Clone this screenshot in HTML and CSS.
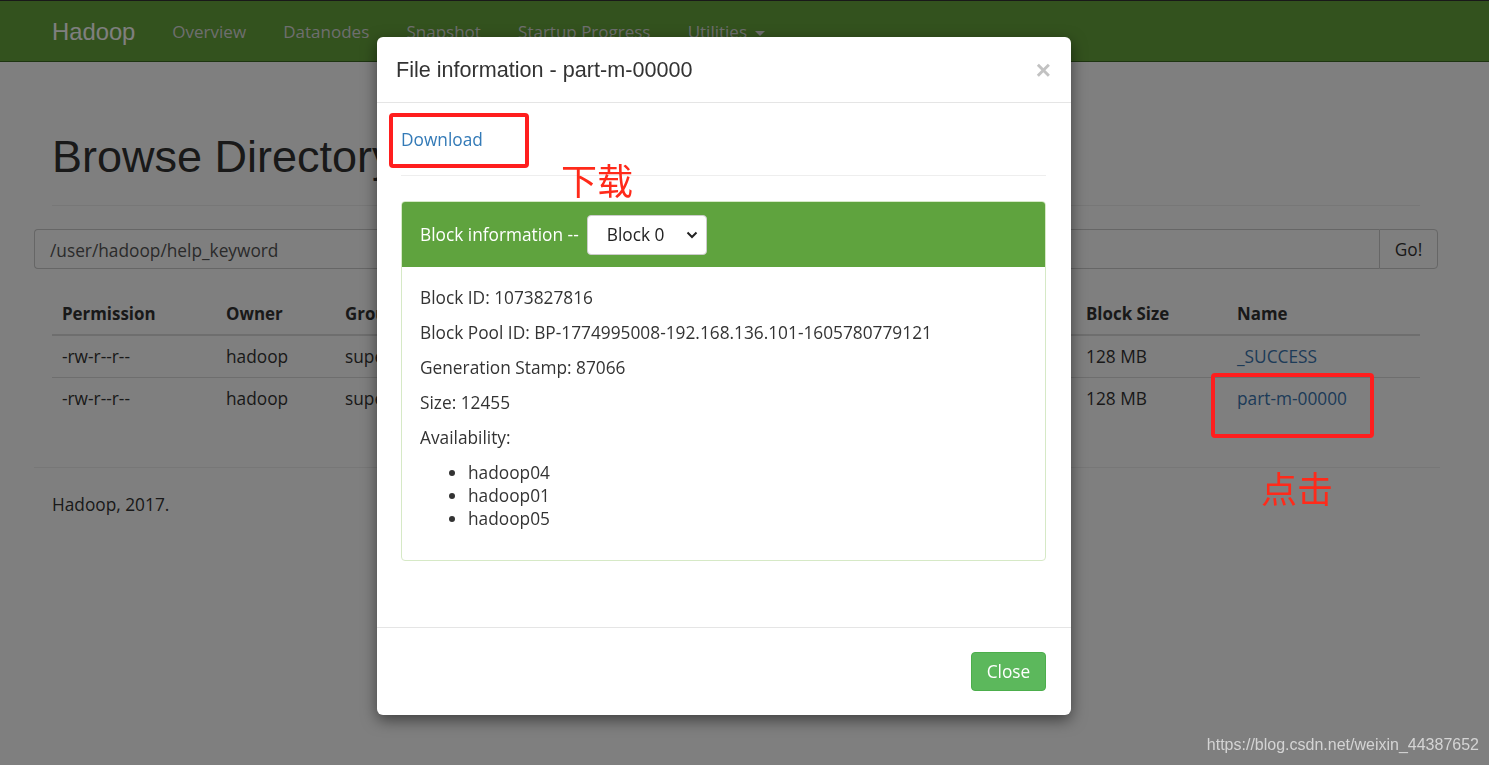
FILE: index.html
```html
<!DOCTYPE html>
<html lang="en">
<head>
<meta charset="utf-8">
<title>Browsing HDFS</title>
<link rel="stylesheet" href="styles.css">
</head>
<body>
<nav class="navbar">
  <div class="nav-inner">
    <span class="brand">Hadoop</span>
    <ul class="nav-links">
      <li>Overview</li>
      <li>Datanodes</li>
      <li>Snapshot</li>
      <li>Startup Progress</li>
      <li>Utilities <span class="caret"></span></li>
    </ul>
  </div>
</nav>

<main class="container">
  <div class="page-header"><h1>Browse Directory</h1></div>

  <div class="search-row">
    <div class="path-input">/user/hadoop/help_keyword</div>
    <div class="go-btn">Go!</div>
  </div>

  <table class="listing">
    <thead>
      <tr>
        <th class="c-perm">Permission</th>
        <th class="c-owner">Owner</th>
        <th class="c-group">Group</th>
        <th class="c-size">Size</th>
        <th class="c-mod">Last Modified</th>
        <th class="c-rep">Replication</th>
        <th class="c-bsize">Block Size</th>
        <th class="c-name">Name</th>
      </tr>
    </thead>
    <tbody>
      <tr>
        <td>-rw-r--r--</td><td>hadoop</td><td>supergroup</td><td>0 B</td><td>Nov 19 18:35</td><td>3</td><td>128 MB</td><td><span class="link">_SUCCESS</span></td>
      </tr>
      <tr>
        <td>-rw-r--r--</td><td>hadoop</td><td>supergroup</td><td>12.16 KB</td><td>Nov 19 18:35</td><td>3</td><td>128 MB</td><td><span class="link">part-m-00000</span></td>
      </tr>
    </tbody>
  </table>

  <hr class="footer-rule">
  <p class="footer-text">Hadoop, 2017.</p>
</main>

<div class="backdrop"></div>

<div class="modal">
  <div class="modal-header">
    <h4 class="modal-title">File information - part-m-00000</h4>
    <span class="close">&times;</span>
  </div>
  <div class="modal-body">
    <div class="download-row"><span class="link-blue">Download</span></div>
    <hr class="body-rule">
    <div class="panel">
      <div class="panel-heading">
        <span>Block information --</span>
        <div class="select">
          <span>Block 0</span>
          <svg class="chev" width="12" height="8" viewBox="0 0 12 8"><path d="M1.5 1.5 L6 6 L10.5 1.5" fill="none" stroke="#222" stroke-width="2"/></svg>
        </div>
      </div>
      <div class="panel-body">
        <p>Block ID: 1073827816</p>
        <p>Block Pool ID: BP-1774995008-192.168.136.101-1605780779121</p>
        <p>Generation Stamp: 87066</p>
        <p>Size: 12455</p>
        <p>Availability:</p>
        <ul>
          <li>hadoop04</li>
          <li>hadoop01</li>
          <li>hadoop05</li>
        </ul>
      </div>
    </div>
  </div>
  <div class="modal-footer">
    <span class="btn-close">Close</span>
  </div>
</div>

<div class="annot box-download"></div>
<div class="annot box-name"></div>
<div class="annot-text txt-download">下载</div>
<div class="annot-text txt-click">点击</div>
<div class="watermark">https://blog.csdn.net/weixin_44387652</div>
</body>
</html>
```

FILE: styles.css
```css
* { box-sizing: border-box; }
html, body { margin: 0; height: 100%; }
body {
  position: relative;
  overflow: hidden;
  background: #fff;
  color: #333;
  font-family: "Open Sans", "Noto Sans", sans-serif;
  font-size: 17.3px;
  line-height: 22px;
}

/* navbar */
.navbar {
  height: 62px;
  background: #66a43c;
  border-top: 1px solid #333;
  border-bottom: 1px solid #3d6a22;
}
.nav-inner {
  display: flex;
  align-items: center;
  height: 100%;
  padding-left: 52px;
  padding-top: 2px;
}
.brand {
  font-family: "Liberation Sans", Arial, sans-serif;
  font-size: 23.8px;
  color: #fff;
  margin-right: 18px;
}
.nav-links {
  display: flex;
  list-style: none;
  margin: 0;
  padding: 0;
  font-size: 17px;
  color: #dcdcdc;
}
.nav-links li { padding: 0 18.6px; }
.nav-links li:first-child { padding-left: 19px; }
.caret {
  display: inline-block;
  width: 0; height: 0;
  margin-left: 4px;
  vertical-align: middle;
  border-top: 5px solid #dcdcdc;
  border-left: 5px solid transparent;
  border-right: 5px solid transparent;
}

/* page */
.container { padding: 0 69px 0 52px; }
.page-header {
  margin-top: 70px;
  padding-bottom: 11px;
  border-bottom: 1px solid #eee;
  margin-bottom: 23px;
}
.page-header h1 {
  margin: 0 0 12px;
  font-family: "Liberation Sans", Arial, sans-serif;
  font-weight: 400;
  font-size: 45px;
  line-height: 50px;
  color: #333;
}
.search-row {
  display: flex;
  margin: 0 -18px 24px;
  height: 40px;
}
.path-input {
  flex: 1;
  border: 1px solid #ccc;
  border-right: 0;
  border-radius: 4px 0 0 4px;
  padding: 10px 15px 0;
  color: #555;
}
.go-btn {
  width: 59px;
  border: 1px solid #ccc;
  border-radius: 0 4px 4px 0;
  display: flex;
  align-items: center;
  justify-content: center;
  padding-top: 1px;
}
.listing {
  width: 100%;
  border-collapse: collapse;
}
.listing th, .listing td {
  text-align: left;
  padding: 10px;
  line-height: 21px;
  font-size: 17.3px;
}
.listing th { border-bottom: 2px solid #ddd; font-weight: 700; font-size: 16.9px; }
.listing td { border-top: 1px solid #ddd; }
.c-perm { width: 164px; }
.c-owner { width: 119px; }
.c-group { width: 150px; }
.c-size { width: 130px; }
.c-mod { width: 300px; }
.c-rep { width: 161px; }
.c-bsize { width: 151px; }
.link { color: #3a76b0; }
.footer-rule {
  margin: 48px -20px 0 -18px;
  border: 0;
  border-top: 1px solid #eee;
}
.footer-text { margin: 26px 0 0; }

/* backdrop */
.backdrop {
  position: fixed;
  inset: 0;
  background: rgba(0, 0, 0, 0.5);
}

/* modal */
.modal {
  position: absolute;
  left: 377px;
  top: 37px;
  width: 694px;
  background: #fff;
  border-radius: 6px;
  box-shadow: 0 5px 15px rgba(0, 0, 0, 0.5);
}
.modal-header {
  display: flex;
  align-items: center;
  justify-content: space-between;
  padding: 17px 20px 16px 19px;
  border-bottom: 1px solid #e5e5e5;
}
.modal-title {
  margin: 0;
  font-family: "Liberation Sans", Arial, sans-serif;
  font-weight: 400;
  font-size: 21.6px;
  line-height: 32px;
  color: #333;
}
.close {
  font-family: "Liberation Sans", Arial, sans-serif;
  font-weight: 700;
  font-size: 26px;
  line-height: 26px;
  color: #c2c2c2;
}
.modal-body { padding: 24px 25px 24px 24px; }
.download-row { line-height: 25px; }
.link-blue { color: #337ab7; }
.body-rule {
  margin: 23px 0 25px;
  border: 0;
  border-top: 1px solid #eee;
}
.panel {
  border: 1px solid #d6e9c6;
  border-radius: 4px;
  margin-bottom: 42px;
}
.panel-heading {
  display: flex;
  align-items: center;
  gap: 8px;
  background: #5fa33e;
  color: #fff;
  padding: 12px 18px;
  height: 65px;
  border-radius: 3px 3px 0 0;
}
.select {
  width: 120px;
  height: 40px;
  display: flex;
  align-items: center;
  justify-content: space-between;
  padding: 0 8px 0 19px;
  background: #fff;
  color: #222;
  border: 1px solid #ccc;
  border-radius: 4px;
}
.panel-body { padding: 19px 18px 18px; }
.panel-body p { margin: 0 0 12px; line-height: 23px; }
.panel-body ul { margin: 0 0 12px; padding-left: 48px; line-height: 23px; }
.modal-footer {
  display: flex;
  justify-content: flex-end;
  padding: 24px 25px 24px 24px;
  border-top: 1px solid #e5e5e5;
}
.btn-close {
  width: 75px;
  height: 39px;
  display: flex;
  align-items: center;
  justify-content: center;
  background: #5cb85c;
  border: 1px solid #4cae4c;
  border-radius: 4px;
  color: #fff;
}

/* annotations */
.annot {
  position: absolute;
  border: 4px solid #ff1e1e;
  border-radius: 4px;
}
.box-download { left: 389px; top: 113px; width: 140px; height: 55px; }
.box-name { left: 1211px; top: 373px; width: 163px; height: 65px; }
.annot-text {
  position: absolute;
  font-family: "Noto Sans CJK SC", sans-serif;
  font-size: 36px;
  line-height: 40px;
  color: #ff2a1a;
}
.txt-download { left: 561px; top: 159px; }
.txt-click { left: 1261px; top: 467px; }
.watermark {
  position: absolute;
  right: 10px;
  bottom: 9px;
  font-family: "Liberation Sans", Arial, sans-serif;
  font-size: 16px;
  color: #d4d4d4;
}
```
